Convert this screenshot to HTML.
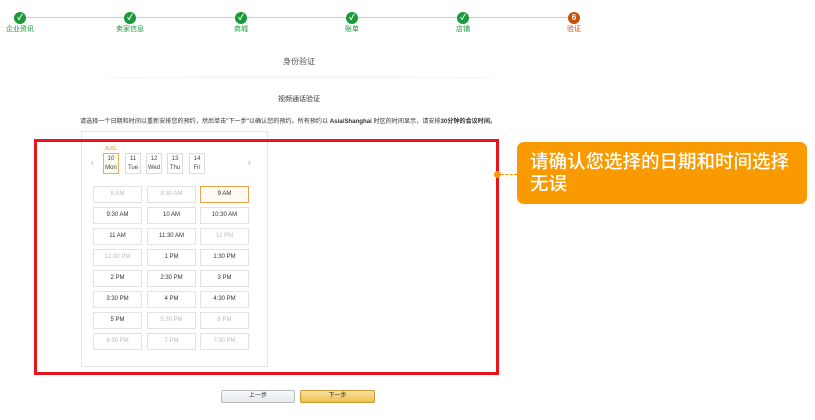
<!DOCTYPE html><html><head><meta charset="utf-8"><style>
body{margin:0;width:815px;height:420px;background:#fff;position:relative;overflow:hidden;font-family:"Liberation Sans","Noto Sans CJK SC",sans-serif;color:#333}
.a{position:absolute}
.line{left:20px;top:17px;width:554px;height:1px;background:#ccc}
.st{width:12px;height:12px;border-radius:50%;background:#1a9a3a;top:12px;color:#fff;font-size:8px;text-align:center;line-height:12px;font-weight:bold}
.lb{top:24px;font-size:7px;color:#1a9a3a;transform:translateX(-50%);white-space:nowrap}
.d{top:153px;width:16px;height:21px;border:1px solid #ddd;font-size:6px;text-align:center;line-height:9px;padding-top:1px;box-sizing:border-box;color:#444}
.t{width:49px;height:17px;border:1px solid #e2e2e2;box-sizing:border-box;font-size:6px;text-align:center;line-height:15px;color:#333}
.g{color:#bbb}
</style></head><body>
<div class="a line"></div>
<div class="a st" style="left:14px">✓</div><div class="a st" style="left:124px">✓</div><div class="a st" style="left:235px">✓</div><div class="a st" style="left:346px">✓</div><div class="a st" style="left:457px">✓</div><div class="a st" style="left:568px;background:#c8500a">6</div>
<div class="a lb" style="left:20px">企业资讯</div><div class="a lb" style="left:130px">卖家信息</div><div class="a lb" style="left:241px">商城</div><div class="a lb" style="left:352px">账单</div><div class="a lb" style="left:463px">店铺</div><div class="a lb" style="left:574px;color:#c8500a">验证</div>
<div class="a" style="left:0;width:598px;top:56px;text-align:center;font-size:8px;color:#555">身份验证</div>
<div class="a" style="left:100px;width:400px;top:76px;height:4px;background:linear-gradient(#f2f2f2,#fff);border-radius:50%"></div>
<div class="a" style="left:0;width:598px;top:94px;text-align:center;font-size:7px">视频通话验证</div>
<div class="a" style="left:80px;top:116px;font-size:6.1px;white-space:nowrap">请选择一个日期和时间以重新安排您的预约，然后单击"下一步"以确认您的预约。所有预约以 <b>Asia/Shanghai</b> 时区的时间显示，请安排<b>30分钟的会议时间。</b></div>
<div class="a" style="left:81px;top:131px;width:187px;height:236px;border:1px solid #e6e6e6;box-sizing:border-box"></div>
<div class="a" style="left:105px;top:146px;font-size:5px;color:#e8902a">AUG</div>
<div class="a" style="left:91px;top:158px;font-size:8px;color:#999">‹</div><div class="a" style="left:248px;top:158px;font-size:8px;color:#999">›</div>
<div class="a d" style="left:103px;border-color:#e8b060;background:#fffaf0">10<br>Mon</div><div class="a d" style="left:125px">11<br>Tue</div><div class="a d" style="left:146px">12<br>Wed</div><div class="a d" style="left:167px">13<br>Thu</div><div class="a d" style="left:189px">14<br>Fri</div>
<div class="a t g" style="left:93px;top:186px">8 AM</div><div class="a t g" style="left:147px;top:186px">8:30 AM</div><div class="a t" style="left:200px;top:186px;border-color:#e8a050;background:#fffaf2">9 AM</div>
<div class="a t" style="left:93px;top:207px">9:30 AM</div><div class="a t" style="left:147px;top:207px">10 AM</div><div class="a t" style="left:200px;top:207px">10:30 AM</div>
<div class="a t" style="left:93px;top:228px">11 AM</div><div class="a t" style="left:147px;top:228px">11:30 AM</div><div class="a t g" style="left:200px;top:228px">12 PM</div>
<div class="a t g" style="left:93px;top:249px">12:30 PM</div><div class="a t" style="left:147px;top:249px">1 PM</div><div class="a t" style="left:200px;top:249px">1:30 PM</div>
<div class="a t" style="left:93px;top:270px">2 PM</div><div class="a t" style="left:147px;top:270px">2:30 PM</div><div class="a t" style="left:200px;top:270px">3 PM</div>
<div class="a t" style="left:93px;top:291px">3:30 PM</div><div class="a t" style="left:147px;top:291px">4 PM</div><div class="a t" style="left:200px;top:291px">4:30 PM</div>
<div class="a t" style="left:93px;top:312px">5 PM</div><div class="a t g" style="left:147px;top:312px">5:30 PM</div><div class="a t g" style="left:200px;top:312px">6 PM</div>
<div class="a t g" style="left:93px;top:333px">6:30 PM</div><div class="a t g" style="left:147px;top:333px">7 PM</div><div class="a t g" style="left:200px;top:333px">7:30 PM</div>
<div class="a" style="left:34px;top:139px;width:465px;height:236px;border:3px solid #e8141c;box-sizing:border-box"></div>
<div class="a" style="left:494px;top:171px;width:7px;height:7px;border-radius:50%;background:#f90"></div>
<div class="a" style="left:501px;top:174px;width:16px;border-top:1px dashed #f90"></div>
<div class="a" style="left:517px;top:142px;width:290px;height:62px;background:#f99a00;border-radius:7px;color:#fff;font-size:18.5px;font-weight:500;line-height:22px;padding:9px 0 0 13px;box-sizing:border-box;white-space:nowrap">请确认您选择的日期和时间选择<br>无误</div>
<div class="a" style="left:221px;top:390px;width:74px;height:13px;border:1px solid #bbb;border-radius:2px;background:linear-gradient(#f7f8fa,#e7e9ec);box-sizing:border-box;font-size:6px;text-align:center;line-height:11px">上一步</div>
<div class="a" style="left:300px;top:390px;width:75px;height:13px;border:1px solid #c89b30;border-radius:2px;background:linear-gradient(#f7dfa5,#f0c14b);box-sizing:border-box;font-size:6px;text-align:center;line-height:11px">下一步</div>
</body></html>
